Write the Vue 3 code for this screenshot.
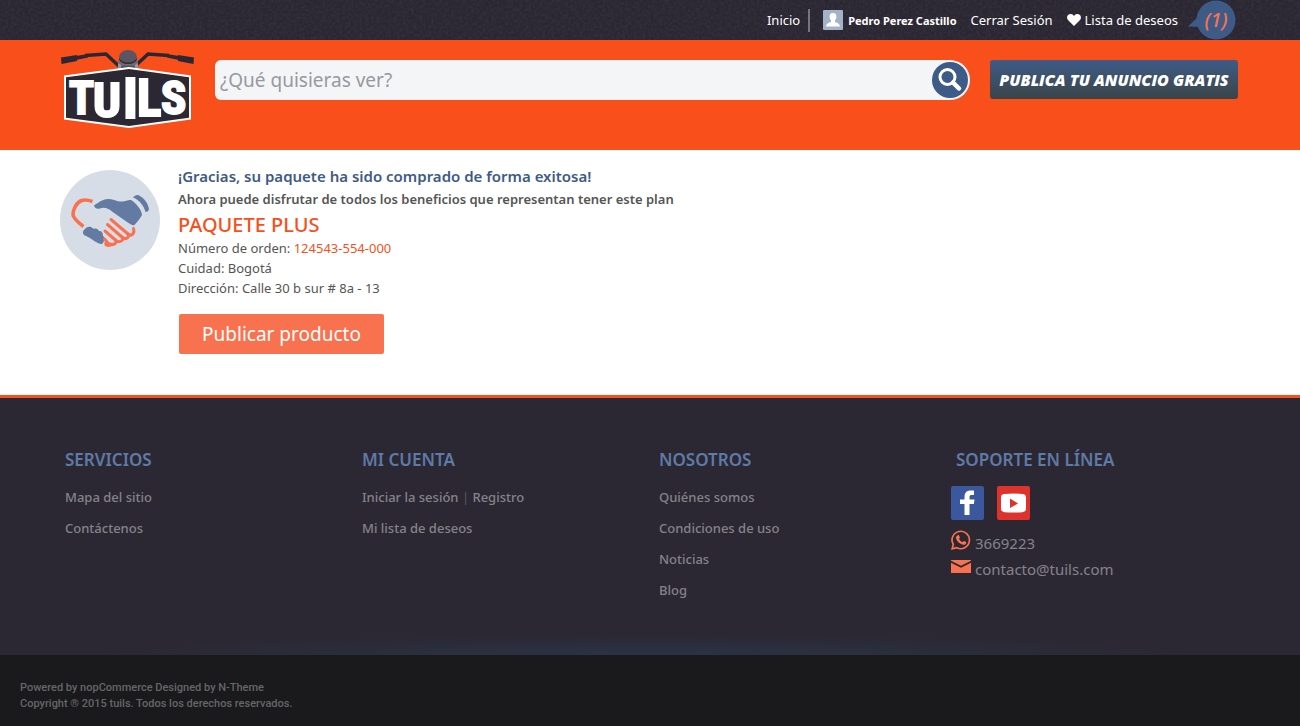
<script setup>
import { ref } from 'vue'

const query = ref('')

const columns = [
  { title: 'SERVICIOS', rows: [['Mapa del sitio'], ['Contáctenos']] },
  { title: 'MI CUENTA', rows: [['Iniciar la sesión', 'Registro'], ['Mi lista de deseos']] },
  { title: 'NOSOTROS', rows: [['Quiénes somos'], ['Condiciones de uso'], ['Noticias'], ['Blog']] }
]
</script>

<template>
  <div class="page">
    <div class="topbar">
      <svg class="grain" aria-hidden="true">
        <filter id="grain-noise">
          <feTurbulence type="fractalNoise" baseFrequency="0.35" numOctaves="3" seed="4" />
          <feColorMatrix values="0 0 0 0 1  0 0 0 0 1  0 0 0 0 1  0.5 0 0 0 -0.17" />
        </filter>
        <rect width="100%" height="100%" filter="url(#grain-noise)" />
      </svg>
      <nav class="container topnav" aria-label="Cuenta">
        <a href="#" class="home">Inicio</a>
        <a href="#" class="user">
          <svg width="20" height="20" viewBox="0 0 20 20" aria-hidden="true">
            <rect width="20" height="20" rx="1" fill="#a3b1c9" />
            <path d="M10 3c2.300 0 3.600 1.600 3.400 3.900-.1 1.700-.8 2.600-1.400 3.400v1.500c0 .7 4.800 1.200 5 4.700H3c.2-3.500 5-4 5-4.700v-1.500c-.6-.8-1.300-1.700-1.400-3.400C6.400 4.600 7.700 3 10 3z" fill="#fff" />
          </svg>
          <span>Pedro Perez Castillo</span>
        </a>
        <a href="#" class="logout">Cerrar Sesión</a>
        <a href="#" class="wish">
          <svg width="14" height="12" viewBox="0 0 14 12" aria-hidden="true">
            <path d="M7 12 1.200 6.300C-.4 4.600-.2 2.100 1.100 1 2.900-.6 5.800-.3 7 2c1.200-2.300 4.100-2.600 5.900-1 1.300 1.100 1.500 3.600-.1 5.300z" fill="#fff" />
          </svg>
          <span>Lista de deseos</span>
        </a>
        <span class="count">
          <svg width="48" height="40" viewBox="0 0 48 40" aria-hidden="true">
            <circle cx="28" cy="20" r="19.500" fill="#3e5b87" />
            <path d="M0 26.500 13 14v13z" fill="#3e5b87" />
          </svg>
          <em>(1)</em>
        </span>
      </nav>
    </div>

    <header class="header">
      <div class="container head">
        <a href="#" class="logo" aria-label="Tuils">
          <svg width="136" height="80" viewBox="0 0 136 80">
            <path d="M25 5.500 46 4l16 15M109 5.500 88 4 72 19" fill="none" stroke="#2b2833" stroke-width="3.500" />
            <path d="M1 7.500 17 5v6L1.500 14zM134 7.500 118 5v6l15.500 3z" fill="#2b2833" />
            <path d="m16 6 12-2v3.500L16 10zM119 6l-12-2v3.500L119 10z" fill="#2b2833" />
            <circle cx="68" cy="13" r="10" fill="#6f6c75" />
            <path d="M58 13q10 8 20 0v6H58z" fill="#99939a" />
            <path d="M61 17h14" stroke="#55515c" stroke-width="3" />
            <ellipse cx="68" cy="7" rx="9" ry="7" fill="#5b5662" />
            <path d="M59 8c4 6 14 6 18 0 0 8-18 8-18 0z" fill="#34313b" />
            <path d="M4 25.500 69 17l62 8.500v44L69 78 4 69.500z" fill="#fff" />
            <path d="M6 27.300 69 19l60 8.300v40.400L69 76 6 67.700z" fill="#2b2833" />
            <g class="wordmark" fill="#fff" stroke="#fff" stroke-width="2">
              <text x="9" y="64" font-size="46">T</text>
              <text x="33" y="67" font-size="49">U</text>
              <text x="63" y="68" font-size="55">I</text>
              <text x="77" y="66" font-size="51">L</text>
              <text x="101" y="64" font-size="47">S</text>
            </g>
          </svg>
        </a>
        <form class="search" role="search" @submit.prevent>
          <input v-model="query" type="text" aria-label="Buscar" placeholder="¿Qué quisieras ver?">
          <button type="submit" aria-label="Buscar">
            <svg width="36" height="36" viewBox="0 0 36 36" aria-hidden="true">
              <circle cx="15.500" cy="15" r="7.500" fill="none" stroke="#fff" stroke-width="3" />
              <path d="m21 20.500 6 6" stroke="#fff" stroke-width="4.500" stroke-linecap="round" />
            </svg>
          </button>
        </form>
        <button type="button" class="publish">PUBLICA TU ANUNCIO GRATIS</button>
      </div>
    </header>

    <main class="container result">
      <svg class="shake" width="100" height="100" viewBox="0 0 100 100" aria-hidden="true">
        <circle cx="50" cy="50" r="50" fill="#d7dde7" />
        <path d="M32.500 31.500c-4-1.500-8-2-11-1-5 2-8.500 9-8.500 14 0 4 6 8.500 10.500 12" fill="none" stroke="#f9724f" stroke-width="3.600" />
        <path d="M34 35.500c5-3.500 10-7 15-6.500 5 0 8 3 13 2.500 4-.5 6-2 9-1.500 4 2 11 10 11 15-2 4-5 7-8 10.500-2-.5-5-2-7-3.500L52 41.500c-4-3.500-8-4.500-12-3-3 .8-5 0-6-3z" fill="#637ba2" />
        <path d="M73 27.500c1.500-2 4-3 6-2 5 2 9 8 10 13.500 0 2-2 3-3.500 3-1.500-6-6-12-12.500-14.500z" fill="#637ba2" />
        <path d="M24 60c2-3 5-4 7-3l3 2c2-1 4 0 5 2 3 0 4 2 4 5 2 1 2 3 0 7-1 1.500-3 1-4 .5-5-2-9-6-13-7.500-3-1-4-4-2-6z" fill="#637ba2" />
        <g fill="none" stroke="#f9724f" stroke-width="3" stroke-linecap="round" stroke-linejoin="round">
          <path d="m51 49.500 17 14.500c4 3 7-1 5.500-5.500" />
          <path d="m47.500 54.500 15 13c4 3 8-1 5-4" />
          <path d="m45 61 11 9.500c4 3 9-1 6-3.500" />
          <path d="m44.500 69 3 3.500c4 4 10 2 8-2.500" />
          <path d="M46 73c-1.500 2 3 4 6 1" />
        </g>
      </svg>
      <div class="details">
        <h1>¡Gracias, su paquete ha sido comprado de forma exitosa!</h1>
        <p class="lead">Ahora puede disfrutar de todos los beneficios que representan tener este plan</p>
        <h2>PAQUETE PLUS</h2>
        <p>Número de orden: <span class="order">124543-554-000</span></p>
        <p>Cuidad: Bogotá</p>
        <p>Dirección: Calle 30 b sur # 8a - 13</p>
        <button type="button" class="cta">Publicar producto</button>
      </div>
    </main>

    <footer>
      <div class="footmain">
        <div class="container columns">
          <section v-for="col in columns" :key="col.title">
            <h3>{{ col.title }}</h3>
            <ul>
              <li v-for="row in col.rows" :key="row[0]">
                <template v-for="(label, i) in row" :key="label"><span v-if="i" class="bar"> | </span><a href="#">{{ label }}</a></template>
              </li>
            </ul>
          </section>
          <section>
            <h3>SOPORTE EN LÍNEA</h3>
            <div class="social">
              <a href="#" aria-label="Facebook">
                <svg width="33" height="34" viewBox="0 0 33 34">
                  <rect width="33" height="34" rx="2" fill="#3b579d" />
                  <path d="M13.500 29V18H9v-4.500h4.500V11c0-4.500 2.500-6.500 6-6.500H23V9h-2.500c-1.700 0-2 .8-2 2.200v2.300h5l-.6 4.500h-4.400v11z" fill="#fff" />
                </svg>
              </a>
              <a href="#" aria-label="YouTube">
                <svg width="33" height="34" viewBox="0 0 33 34">
                  <rect width="33" height="34" rx="2" fill="#de322c" />
                  <path d="M7.500 8q9-1 18 0Q29 8.200 29 11.500v11q0 3.300-3.500 3.700-9 .8-18 0Q4 25.800 4 22.500v-11Q4 8.200 7.500 8z" fill="#fff" />
                  <path d="m13 12.500 8 5-8 4.500z" fill="#de322c" />
                </svg>
              </a>
            </div>
            <a href="#" class="contact">
              <svg width="20" height="20" viewBox="0 0 20 20" aria-hidden="true">
                <path d="M1.200 18.800 2.300 14.500a8.700 8.700 0 1 1 3.400 3.200z" fill="none" stroke="#f9724f" stroke-width="1.700" />
                <path d="M6.700 5.200c.8-.5 1.300-.1 1.700 1l.5 1.300c.1.600-.9 1-.8 1.400.8 1.500 1.900 2.600 3.500 3.200.5.100 1-1.200 1.500-1l2 1c.5.400 0 1.700-.6 2.200-1.300 1-3.300.5-5.300-.7-2.200-1.300-4.200-3.800-4.200-6.100 0-1 .8-1.800 1.700-2.300z" fill="#f9724f" />
              </svg>
              <span>3669223</span>
            </a>
            <a href="#" class="contact">
              <svg width="20" height="20" viewBox="0 0 20 20" aria-hidden="true">
                <path d="M0 4h20v.8l-10 5-10-5zM0 6.800l10 5 10-5V17H0z" fill="#f9724f" />
              </svg>
              <span>contacto@tuils.com</span>
            </a>
          </section>
        </div>
      </div>
      <div class="legal">
        <p>Powered by <a href="#">nopCommerce</a> Designed by <a href="#">N-Theme</a></p>
        <p>Copyright ® 2015 tuils. Todos los derechos reservados.</p>
      </div>
    </footer>
  </div>
</template>

<style>
body { margin: 0; background: #1a191c; }
</style>

<style scoped>
.page {
  min-height: 100vh;
  display: flex;
  flex-direction: column;
  background: #fff;
  font-family: "Noto Sans", "Open Sans", sans-serif;
  font-size: 13px;
  color: #555;
}
.page * { box-sizing: border-box; }
a { color: inherit; text-decoration: none; }
button, input { font-family: inherit; border: 0; padding: 0; }
button { cursor: pointer; }
svg { display: block; flex: none; }
h1, h2, h3, p, ul { margin: 0; padding: 0; }
li { list-style: none; }
.container { width: 100%; max-width: 1180px; margin: 0 auto; }

.topbar { position: relative; background: #2a2733; }
.grain { position: absolute; inset: 0; width: 100%; height: 100%; opacity: 0.18; }
.topnav {
  position: relative;
  display: flex;
  justify-content: flex-end;
  align-items: center;
  height: 40px;
  padding-right: 4px;
  font-size: 13px;
  color: #fff;
}
.home { padding-right: 8px; margin-right: 13px; border-right: 2px solid #77757e; line-height: 23px; }
.user { display: flex; align-items: center; gap: 5px; margin-right: 14px; font-size: 11px; font-weight: 700; }
.logout { margin-right: 14px; }
.wish { display: flex; align-items: center; gap: 4px; margin-right: 10px; }
.count { position: relative; }
.count em { position: absolute; inset: 0 0 0 8px; text-align: center; font-size: 20px; line-height: 40px; font-weight: 500; color: #f9724f; }

.header { background: #f84f1b; }
.head { display: flex; align-items: flex-start; height: 110px; padding: 10px 2px 0 0; }
.logo { margin-right: 19px; }
.wordmark { font-family: "Liberation Sans Narrow", "Roboto Condensed", "DejaVu Sans Condensed", sans-serif; font-weight: 700; }
.search { position: relative; display: flex; flex: 1; margin-top: 10px; margin-right: 20px; }
.search input {
  width: 100%;
  height: 40px;
  padding: 0 50px 0 5px;
  border-radius: 6px 20px 20px 6px;
  background: #f4f5f7;
  font-size: 19px;
  color: #555;
}
.search input::placeholder { color: #98999d; opacity: 1; }
.search button { position: absolute; top: 2px; right: 2px; width: 36px; height: 36px; border-radius: 50%; background: #3e5b87; }
.publish {
  width: 248px;
  height: 39px;
  margin-top: 10px;
  border-radius: 3px;
  background: linear-gradient(#3e5b87, #3b4548);
  color: #fff;
  font-family: "Open Sans", "Noto Sans", sans-serif;
  font-size: 16px;
  font-style: italic;
  font-weight: 800;
  white-space: nowrap;
}

.result { display: flex; gap: 18px; padding: 20px 0 41px; }
.details { display: flex; flex-direction: column; align-items: flex-start; margin-top: -5px; }
h1 { font-size: 15px; line-height: 23px; font-weight: 600; color: #3e5b87; }
.details p { font-size: 13px; line-height: 20px; }
.details .lead { line-height: 23px; font-weight: 600; }
h2 { font-size: 20px; line-height: 27px; font-weight: 500; color: #f84f1b; }
.order { color: #f84f1b; }
.cta {
  height: 40px;
  width: 205px;
  margin: 16px 0 0 1px;
  border-radius: 2px;
  background: #f9724f;
  color: #fff;
  font-size: 19px;
}

footer { flex: 1; display: flex; flex-direction: column; background: #1a191c; color: #85838a; }
.footmain {
  border-top: 3px solid #f84f1b;
  background: radial-gradient(ellipse 42% 20px at 50% 100%, #2b3347, #2b283300) no-repeat, #2b2833;
}
.columns { display: grid; grid-template-columns: repeat(4, 297px); min-height: 257px; padding: 50px 0 40px 5px; }
h3 { margin-bottom: 14px; font-size: 17px; line-height: 24px; font-weight: 600; color: #5f7aa6; }
li { font-size: 13px; line-height: 22px; margin-bottom: 9px; font-weight: 500; white-space: nowrap; }
.bar { color: #5c5a60; font-weight: 400; }
.social { display: flex; gap: 13px; margin-left: -5px; margin-bottom: 10px; }
.contact { display: flex; align-items: flex-start; gap: 4px; margin-left: -5px; height: 26px; font-size: 15px; line-height: 26px; }
.legal { padding: 25px 20px 14px; font-family: Roboto, "Noto Sans", sans-serif; font-size: 11px; line-height: 16px; color: #666; font-weight: 500; }
</style>
